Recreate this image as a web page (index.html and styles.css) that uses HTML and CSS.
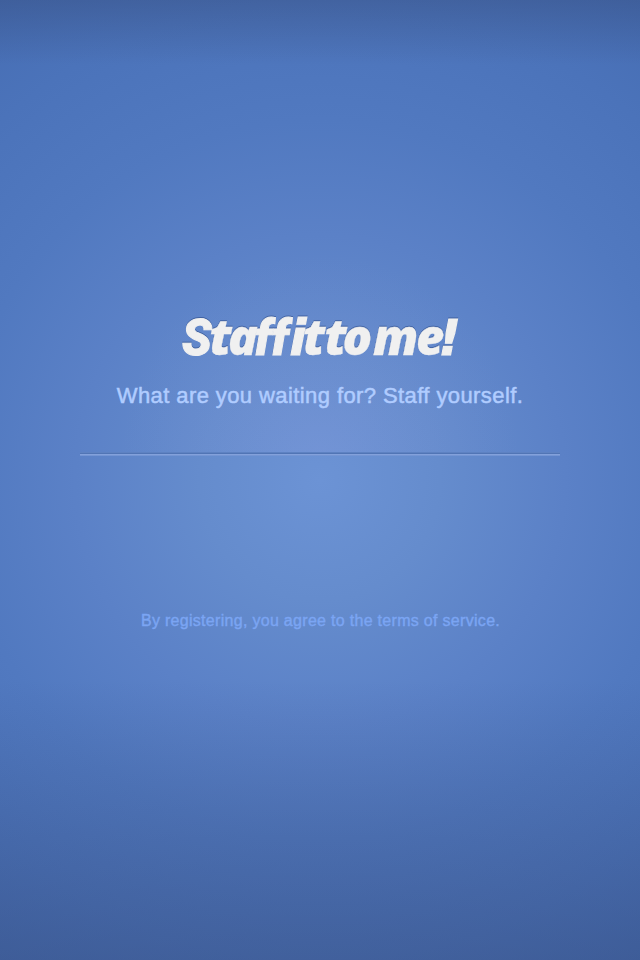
FILE: index.html
```html
<!DOCTYPE html>
<html lang="en">
<head>
<meta charset="utf-8">
<title>Staff it to me!</title>
<link rel="stylesheet" href="styles.css">
</head>
<body>
<main class="screen">
  <h1 class="logo">
    <svg class="wordmark" width="300" height="60" viewBox="170 305 300 60">
      <text y="355"><tspan class="oblique" x="182">S</tspan><tspan x="209.5 228">ta</tspan><tspan class="oblique" x="254.5 271.5">ff</tspan></text>
      <text y="355"><tspan class="square" x="289.5">i</tspan><tspan x="303">t</tspan></text>
      <text x="324.5 342.5" y="355">to</text>
      <text x="373 416" y="355">me<tspan class="square" x="438.5">!</tspan></text>
    </svg>
  </h1>
  <p class="tagline">What are you waiting for? Staff yourself.</p>
  <hr class="divider">
  <p class="terms">By registering, you agree to the terms of service.</p>
</main>
</body>
</html>
```
FILE: styles.css
```css
* { box-sizing: border-box; }
body { margin: 0; }
.screen {
  width: 640px;
  height: 960px;
  padding-top: 305px;
  display: flex;
  flex-direction: column;
  align-items: center;
  overflow: hidden;
  font-family: "Liberation Sans", Arial, sans-serif;
  background:
    radial-gradient(circle at 320px 453px, rgba(145, 155, 220, .2), rgba(145, 155, 220, 0) 200px) 0 0 / 640px 453px no-repeat,
    linear-gradient(to bottom, rgba(50, 70, 115, .36), rgba(50, 70, 115, 0) 65px),
    linear-gradient(to top, rgba(50, 68, 112, .4), rgba(50, 68, 112, 0) 280px),
    radial-gradient(circle at 320px 480px, #6c93d5 0, #658ccd 120px, #5b81c7 245px, #5179c0 360px, #4b73ba 480px, #466db3 580px);
}
.logo { margin: 0; height: 60px; }
.wordmark {
  display: block;
  overflow: visible;
  fill: #f0f0f0;
  stroke: #f0f0f0;
  stroke-width: .3px;
  font: italic 800 49px "Open Sans", "Noto Sans", sans-serif;
  filter: drop-shadow(0 -1px 0 rgba(45, 75, 135, .6));
}
.oblique { font-family: Roboto, sans-serif; font-weight: 900; stroke-width: 1px; }
.square { font-family: "DejaVu Sans", sans-serif; font-weight: 700; stroke-width: 1.2px; }
.tagline {
  margin: 17px 0 0;
  font-size: 22px;
  line-height: 28px;
  letter-spacing: .41px;
  white-space: nowrap;
  color: #b0ccff;
  -webkit-text-stroke: .5px #b0ccff;
}
.divider {
  width: 480px;
  height: 4px;
  margin: 42px 0 0;
  border: 0;
  background: linear-gradient(#5e82c2 0 1px, #5175b5 1px 2px, #83a1db 2px 3px, #7495d3 3px);
}
.terms {
  margin: 155px 0 0;
  padding-left: 1px;
  font-size: 16px;
  line-height: 20px;
  letter-spacing: .3px;
  white-space: nowrap;
  color: #7ba5f3;
  -webkit-text-stroke: .4px #7ba5f3;
}
```
